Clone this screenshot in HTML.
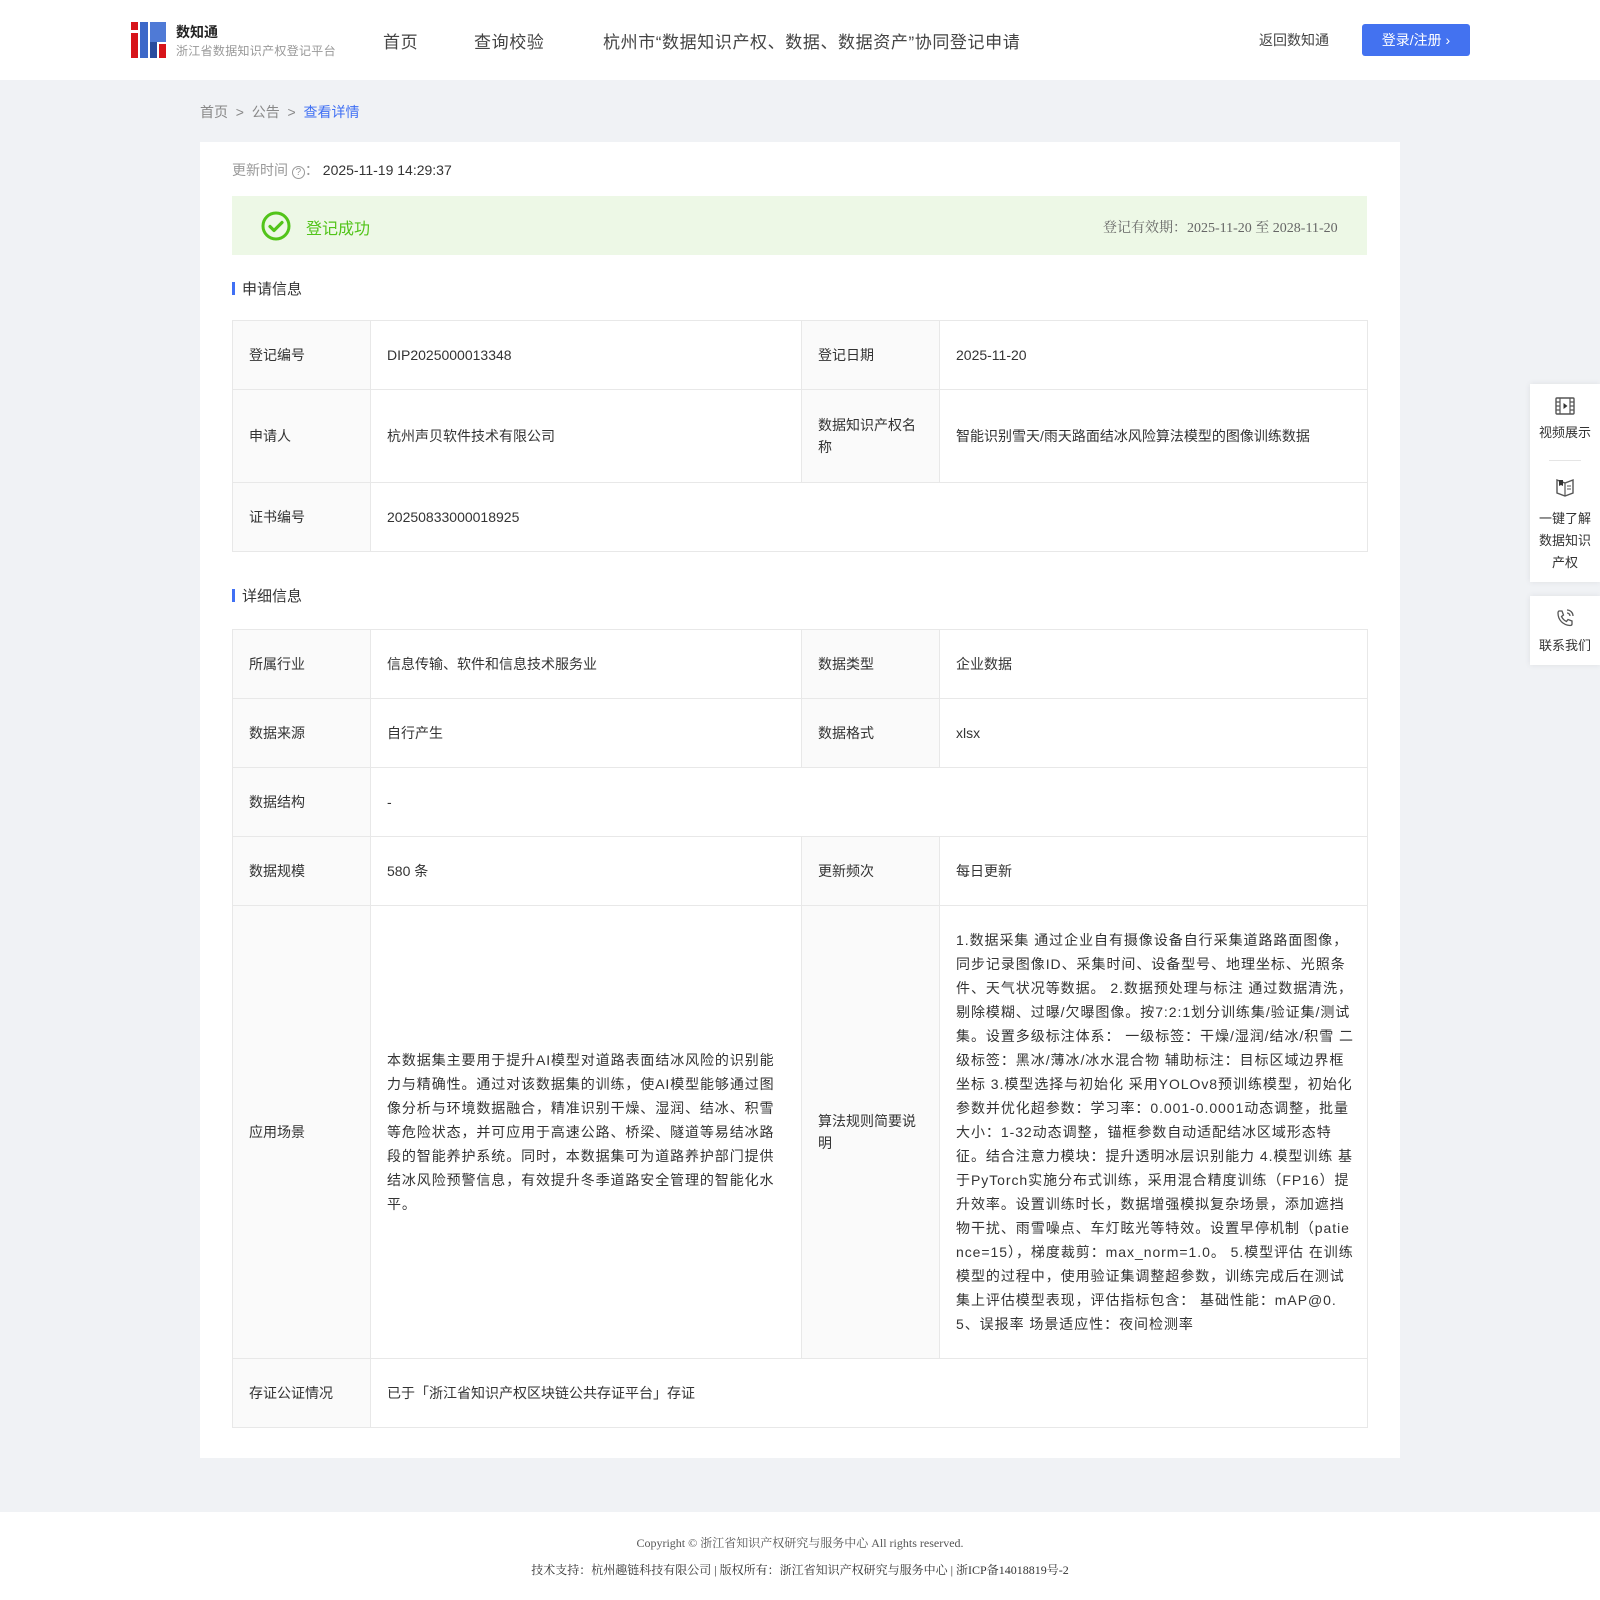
<!DOCTYPE html>
<html><head><meta charset="utf-8"><style>
*{margin:0;padding:0;box-sizing:border-box}
body{width:1600px;height:1600px;background:#f0f2f5;font-family:"Liberation Sans","Noto Sans CJK SC",sans-serif;color:#333;position:relative;overflow:hidden}
.abs{position:absolute}
header{position:absolute;left:0;top:0;width:1600px;height:80px;background:#fff}
.nav{position:absolute;top:28px;font-size:17px;color:#444;white-space:nowrap;letter-spacing:.6px}
.card{position:absolute;left:200px;top:142px;width:1200px;height:1316px;background:#fff}
table{position:absolute;left:232px;width:1135px;border-collapse:collapse;font-size:14px;color:#333;table-layout:fixed}
td{border:1px solid #e8e8e8;padding:0 16px;vertical-align:middle;line-height:22px;overflow:visible}
td.l,td.l2{background:#fafafa}
.sec{position:absolute;left:232px;font-size:15px;color:#333}
.sec:before{content:"";display:inline-block;width:3px;height:13px;background:#4070f4;margin-right:7px;vertical-align:-1px}
.side{position:absolute;left:1530px;width:70px;background:#fff;box-shadow:0 0 6px rgba(0,0,0,.08);text-align:center;font-size:13px;color:#333;line-height:22px}
.lines div{white-space:nowrap}
</style></head><body>
<header>
  <svg class="abs" style="left:131px;top:22px" width="35" height="36" viewBox="0 0 35 36">
    <rect x="0" y="0" width="7" height="36" fill="#d7141a"/><rect x="0" y="8" width="7" height="3" fill="#fff"/>
    <rect x="9" y="0" width="8" height="36" fill="#3d68c9"/><rect x="19" y="0" width="16" height="20" fill="#4f7ad6"/>
    <rect x="19" y="20" width="7" height="16" fill="#2a4c9e"/><rect x="28" y="22" width="7" height="14" fill="#d7141a"/>
  </svg>
  <div class="abs" style="left:176px;top:22px;font-size:14px;font-weight:bold;color:#222">数知通</div>
  <div class="abs" style="left:176px;top:42px;font-size:12px;color:#999;letter-spacing:.3px">浙江省数据知识产权登记平台</div>
  <div class="nav" style="left:383px">首页</div>
  <div class="nav" style="left:474px">查询校验</div>
  <div class="nav" style="left:603px">杭州市“数据知识产权、数据、数据资产”协同登记申请</div>
  <div class="abs" style="left:1259px;top:30px;font-size:14px;color:#444">返回数知通</div>
  <div class="abs" style="left:1362px;top:24px;width:108px;height:32px;background:#4372f0;border-radius:3px;color:#fff;font-size:14px;line-height:32px;text-align:center">登录/注册 ›</div>
</header>
<div class="abs" style="left:200px;top:102px;font-size:14px;color:#888">首页 &nbsp;&gt;&nbsp; 公告 &nbsp;&gt;&nbsp; <span style="color:#4070f4">查看详情</span></div>
<div class="card"></div>
<div class="abs" style="left:232px;top:160px;font-size:14px;color:#999">更新时间 <span style="display:inline-block;width:13px;height:13px;border:1px solid #999;border-radius:50%;font-size:10px;line-height:11px;text-align:center;vertical-align:0">?</span>： <span style="color:#333">2025-11-19 14:29:37</span></div>
<div class="abs" style="left:232px;top:196px;width:1135px;height:59px;background:#edf8e6"></div>
<svg class="abs" style="left:261px;top:211px" width="30" height="30" viewBox="0 0 30 30"><circle cx="15" cy="15" r="13" fill="none" stroke="#52c41a" stroke-width="3"/><path d="M9 15.5l4 4 8-8" fill="none" stroke="#52c41a" stroke-width="3.2" stroke-linecap="round" stroke-linejoin="round"/></svg>
<div class="abs" style="left:306px;top:215px;font-size:16px;color:#52c41a">登记成功</div>
<div class="abs" style="left:1103px;top:217px;font-size:14px;color:#666;font-family:'Liberation Serif','Noto Serif CJK SC',serif">登记有效期：2025-11-20 至 2028-11-20</div>

<div class="sec" style="top:278px">申请信息</div>
<table style="top:320px">
<colgroup><col style="width:138px"><col style="width:431px"><col style="width:138px"><col style="width:428px"></colgroup>
<tr style="height:69px"><td class="l">登记编号</td><td>DIP2025000013348</td><td class="l2">登记日期</td><td>2025-11-20</td></tr>
<tr style="height:93px"><td class="l">申请人</td><td>杭州声贝软件技术有限公司</td><td class="l2">数据知识产权名称</td><td>智能识别雪天/雨天路面结冰风险算法模型的图像训练数据</td></tr>
<tr style="height:69px"><td class="l">证书编号</td><td colspan="3">20250833000018925</td></tr>
</table>

<div class="sec" style="top:585px">详细信息</div>
<table style="top:629px">
<colgroup><col style="width:138px"><col style="width:431px"><col style="width:138px"><col style="width:428px"></colgroup>
<tr style="height:69px"><td class="l">所属行业</td><td>信息传输、软件和信息技术服务业</td><td class="l2">数据类型</td><td>企业数据</td></tr>
<tr style="height:69px"><td class="l">数据来源</td><td>自行产生</td><td class="l2">数据格式</td><td>xlsx</td></tr>
<tr style="height:69px"><td class="l">数据结构</td><td colspan="3">-</td></tr>
<tr style="height:69px"><td class="l">数据规模</td><td>580 条</td><td class="l2">更新频次</td><td>每日更新</td></tr>
<tr style="height:453px"><td class="l">应用场景</td><td><div class="lines" style="line-height:24px;letter-spacing:.9px">
<div>本数据集主要用于提升AI模型对道路表面结冰风险的识别能</div><div>力与精确性。通过对该数据集的训练，使AI模型能够通过图</div><div>像分析与环境数据融合，精准识别干燥、湿润、结冰、积雪</div><div>等危险状态，并可应用于高速公路、桥梁、隧道等易结冰路</div><div>段的智能养护系统。同时，本数据集可为道路养护部门提供</div><div>结冰风险预警信息，有效提升冬季道路安全管理的智能化水</div><div>平。</div></div></td>
<td class="l2">算法规则简要说明</td><td><div class="lines" style="line-height:24px;letter-spacing:.95px">
<div>1.数据采集 通过企业自有摄像设备自行采集道路路面图像，</div><div>同步记录图像ID、采集时间、设备型号、地理坐标、光照条</div><div>件、天气状况等数据。 2.数据预处理与标注 通过数据清洗，</div><div>剔除模糊、过曝/欠曝图像。按7:2:1划分训练集/验证集/测试</div><div>集。设置多级标注体系： 一级标签：干燥/湿润/结冰/积雪 二</div><div>级标签：黑冰/薄冰/冰水混合物 辅助标注：目标区域边界框</div><div>坐标 3.模型选择与初始化 采用YOLOv8预训练模型，初始化</div><div>参数并优化超参数：学习率：0.001-0.0001动态调整，批量</div><div>大小：1-32动态调整，锚框参数自动适配结冰区域形态特</div><div>征。结合注意力模块：提升透明冰层识别能力 4.模型训练 基</div><div>于PyTorch实施分布式训练，采用混合精度训练（FP16）提</div><div>升效率。设置训练时长，数据增强模拟复杂场景，添加遮挡</div><div>物干扰、雨雪噪点、车灯眩光等特效。设置早停机制（patie</div><div>nce=15），梯度裁剪：max_norm=1.0。 5.模型评估 在训练</div><div>模型的过程中，使用验证集调整超参数，训练完成后在测试</div><div>集上评估模型表现，评估指标包含： 基础性能：mAP@0.</div><div>5、误报率 场景适应性：夜间检测率</div></div></td></tr>
<tr style="height:69px"><td class="l">存证公证情况</td><td colspan="3">已于「浙江省知识产权区块链公共存证平台」存证</td></tr>
</table>

<div class="side" style="top:384px;height:198px">
  <svg style="margin-top:13px" width="20" height="18" viewBox="0 0 20 18"><rect x="1" y="1" width="18" height="16" rx="1" fill="none" stroke="#555" stroke-width="1.4"/><path d="M5 1v16M15 1v16M1 5h4M1 9h4M1 13h4M15 5h4M15 9h4M15 13h4" stroke="#555" stroke-width="1.2"/><path d="M8.5 6l4 3-4 3z" fill="#333"/></svg>
  <div>视频展示</div>
  <div style="width:32px;height:1px;background:#e5e5e5;margin:16px auto 16px"></div>
  <svg width="20" height="20" viewBox="0 0 20 20"><path d="M2 3l8 3 8-3v13l-8 3-8-3z" fill="none" stroke="#555" stroke-width="1.4"/><path d="M10 6v13" stroke="#555" stroke-width="1.2"/><path d="M4 3v6l2-1 2 1V3" fill="#333"/><path d="M12 9h4M12 12h4" stroke="#555"/></svg>
  <div style="margin-top:4px">一键了解<br>数据知识<br>产权</div>
</div>
<div class="side" style="top:596px;height:69px">
  <svg style="margin-top:12px" width="20" height="20" viewBox="0 0 20 20"><path d="M4 3l3 0 1.5 4-2 1.5a10 10 0 0 0 5 5l1.5-2 4 1.5v3c0 1-1 1.5-2 1.5C8 17 3 12 3 5c0-1 .5-2 1-2z" fill="none" stroke="#555" stroke-width="1.3"/><path d="M12 2a6 6 0 0 1 6 6M12 5a3 3 0 0 1 3 3" fill="none" stroke="#555" stroke-width="1.3"/></svg>
  <div>联系我们</div>
</div>

<div class="abs" style="left:0;top:1512px;width:1600px;height:88px;background:#fff"></div>
<div class="abs" style="left:0;top:1534px;width:1600px;text-align:center;font-size:12px;color:#555;font-family:'Liberation Serif','Noto Serif CJK SC',serif">Copyright © 浙江省知识产权研究与服务中心 All rights reserved.</div>
<div class="abs" style="left:0;top:1561px;width:1600px;text-align:center;font-size:12px;color:#333;font-family:'Liberation Serif','Noto Serif CJK SC',serif">技术支持：杭州趣链科技有限公司 | 版权所有：浙江省知识产权研究与服务中心 | 浙ICP备14018819号-2</div>
</body></html>
